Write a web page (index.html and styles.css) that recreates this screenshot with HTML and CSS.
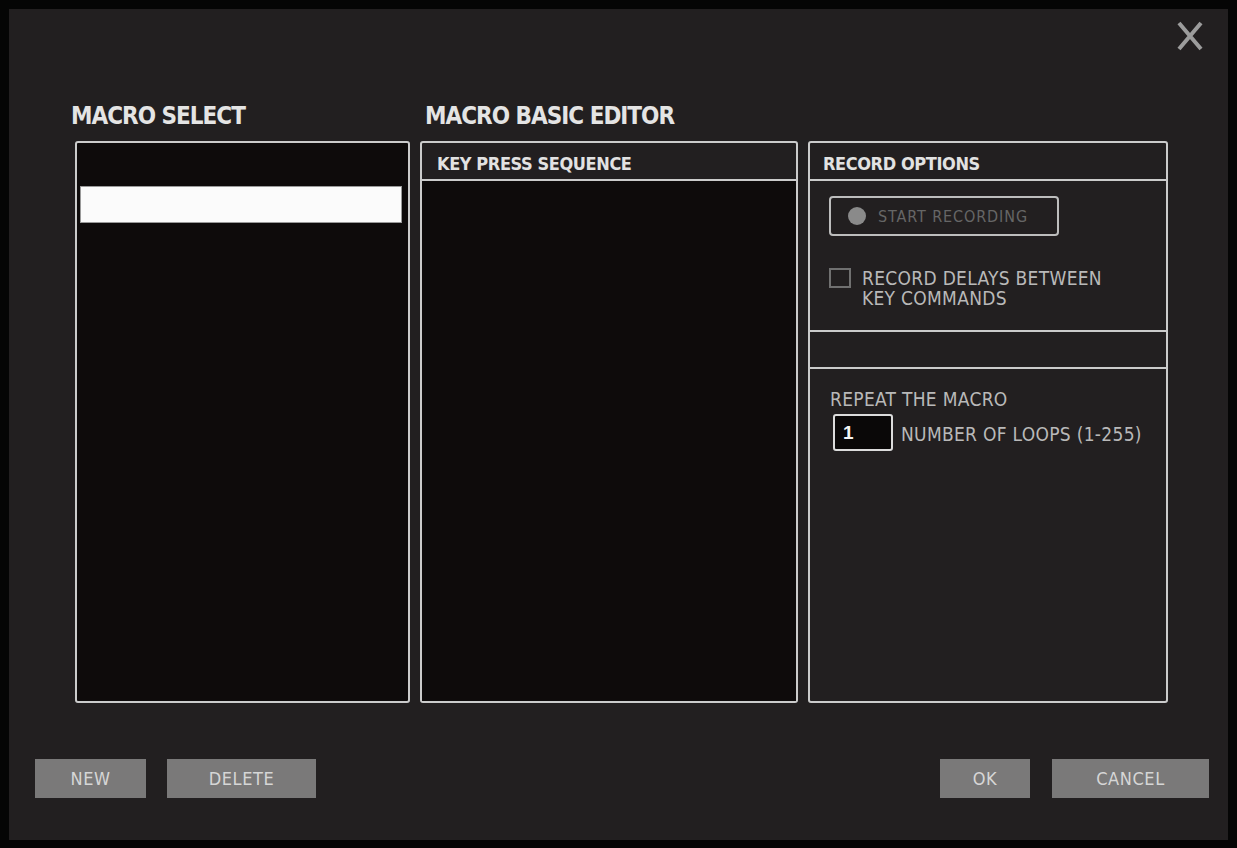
FILE: index.html
```html
<!DOCTYPE html>
<html>
<head>
<meta charset="utf-8">
<link rel="stylesheet" href="styles.css">
</head>
<body>
<div class="frame">
  <div class="topbar">
    <svg class="close" width="26" height="30" viewBox="0 0 26 30">
      <path d="M2 2 L24 28 M24 2 L2 28" stroke="#9c9c9c" stroke-width="4" fill="none"/>
    </svg>
  </div>
  <div class="headings">
    <div class="h-select">MACRO SELECT</div>
    <div class="h-editor">MACRO BASIC EDITOR</div>
  </div>
  <div class="panels">
    <div class="box list">
      <div class="list-item"></div>
    </div>
    <div class="box seq">
      <div class="box-head">KEY PRESS SEQUENCE</div>
      <div class="seq-body"></div>
    </div>
    <div class="box opts">
      <div class="box-head">RECORD OPTIONS</div>
      <div class="sec sec-record">
        <div class="rec-btn"><span class="dot"></span><span>START RECORDING</span></div>
        <div class="check-row">
          <span class="check"></span>
          <span class="label two-line"><span class="line">RECORD DELAYS BETWEEN</span><span class="line">KEY COMMANDS</span></span>
        </div>
      </div>
      <div class="sec sec-empty"></div>
      <div class="sec sec-repeat">
        <div class="label">REPEAT THE MACRO</div>
        <div class="loop-row">
          <div class="num">1</div>
          <span class="label">NUMBER OF LOOPS (1-255)</span>
        </div>
      </div>
    </div>
  </div>
  <div class="actions">
    <div class="group">
      <div class="btn btn-new">NEW</div>
      <div class="btn btn-delete">DELETE</div>
    </div>
    <div class="group">
      <div class="btn btn-ok">OK</div>
      <div class="btn btn-cancel">CANCEL</div>
    </div>
  </div>
</div>
</body>
</html>
```
FILE: styles.css
```css
html, body {
  margin: 0;
  padding: 0;
  background: #050505;
}
body {
  width: 1237px;
  height: 848px;
  overflow: hidden;
  font-family: "DejaVu Sans Condensed", "DejaVu Sans", sans-serif;
  font-stretch: condensed;
}
.frame {
  margin: 9px 0 0 9px;
  width: 1219px;
  height: 831px;
  background: #221f20;
  display: flex;
  flex-direction: column;
  box-sizing: border-box;
}
.topbar {
  height: 94px;
  display: flex;
  justify-content: flex-end;
  align-items: flex-start;
  padding: 12px 25px 0 0;
  box-sizing: border-box;
}
.headings {
  height: 38px;
  display: grid;
  grid-template-columns: 335px 378px 360px;
  column-gap: 10px;
  padding-left: 66px;
  color: #e4e4e4;
  font-weight: bold;
  font-size: 24px;
  letter-spacing: -1px;
  line-height: 26px;
}
.h-select { margin-left: -4px; }
.h-editor { margin-left: 5px; }
.panels {
  height: 562px;
  display: grid;
  grid-template-columns: 335px 378px 360px;
  column-gap: 10px;
  padding-left: 66px;
}
.box {
  border: 2px solid #cbcbcb;
  border-radius: 3px;
  box-sizing: border-box;
  display: flex;
  flex-direction: column;
}
.list {
  background: #0e0b0b;
}
.list-item {
  margin: 43px 6px 0 3px;
  height: 37px;
  background: #fbfbfb;
  border: 1px solid #9a9a9a;
  box-sizing: border-box;
}
.box-head {
  border-bottom: 2px solid #cbcbcb;
  color: #e2e2e2;
  font-weight: bold;
  font-size: 18px;
  letter-spacing: -0.4px;
  line-height: 20px;
  padding: 11px 0 0 13px;
  box-sizing: content-box;
  height: 25px;
  flex: none;
}
.seq .box-head { padding-left: 15px; }
.seq-body {
  flex: 1;
  background: #0e0b0b;
}
.opts { background: #221f20; }
.sec { border-bottom: 2px solid #cbcbcb; flex: none; }
.sec-record {
  height: 151px;
  padding: 15px 0 0 19px;
  box-sizing: border-box;
}
.rec-btn {
  width: 230px;
  height: 40px;
  border: 2px solid #bdbdbd;
  border-radius: 4px;
  box-sizing: border-box;
  display: flex;
  align-items: center;
  padding-left: 17px;
  gap: 12px;
  color: #666;
  font-size: 16px;
  letter-spacing: 0.9px;
}
.dot {
  width: 18px;
  height: 18px;
  border-radius: 50%;
  background: #8a8a8a;
  flex: none;
}
.check-row {
  display: flex;
  align-items: flex-start;
  margin-top: 32px;
  gap: 11px;
}
.check {
  width: 22px;
  height: 20px;
  border: 2px solid #707070;
  box-sizing: border-box;
  flex: none;
}
.label {
  color: #b9b9b9;
  font-size: 19px;
  line-height: 20px;
  letter-spacing: 0.3px;
}
.two-line {
  display: flex;
  flex-direction: column;
  margin-top: 0;
}
.line { display: block; height: 20px; }
.sec-empty { height: 35px; }
.sec-repeat {
  border-bottom: none;
  padding: 20px 0 0 20px;
}
.loop-row {
  display: flex;
  align-items: center;
  margin-top: 5px;
  margin-left: 3px;
  gap: 8px;
}
.num {
  width: 60px;
  height: 37px;
  border: 2px solid #dcdcdc;
  border-radius: 3px;
  background: #0a0808;
  box-sizing: border-box;
  color: #f5f5f5;
  font-weight: bold;
  font-size: 19px;
  line-height: 33px;
  padding-left: 8px;
  font-family: "Liberation Sans", sans-serif;
}
.loop-row .label { margin-top: 2px; }
.actions {
  margin-top: 56px;
  display: flex;
  justify-content: space-between;
  padding: 0 19px 0 26px;
}
.group { display: flex; gap: 21px; }
.group + .group { gap: 22px; }
.btn {
  height: 39px;
  background: #7a7979;
  color: #d6d6d6;
  font-size: 18px;
  letter-spacing: 0.6px;
  display: flex;
  align-items: center;
  justify-content: center;
  box-sizing: border-box;
}
.btn-new { width: 111px; }
.btn-delete { width: 149px; }
.btn-ok { width: 90px; }
.btn-cancel { width: 157px; }
```
